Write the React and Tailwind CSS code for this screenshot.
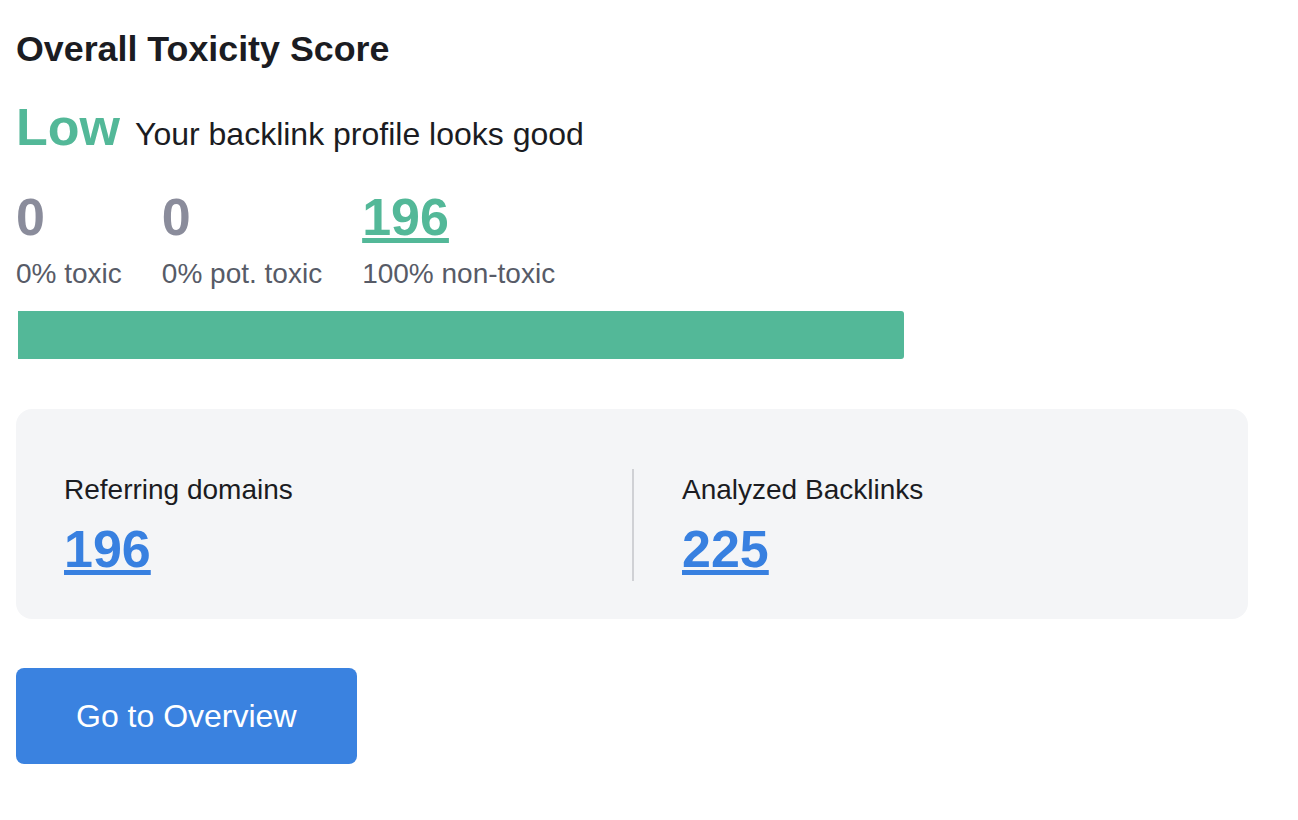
import React from 'react';

const stats = [
  { value: '0', label: '0% toxic', link: false },
  { value: '0', label: '0% pot. toxic', link: false },
  { value: '196', label: '100% non-toxic', link: true },
];

const totals = [
  { label: 'Referring domains', value: '196' },
  { label: 'Analyzed Backlinks', value: '225' },
];

const App = () => {
  return (
    <div className="min-h-screen bg-white pl-4 pt-[27px] font-['Liberation_Sans',Arial,sans-serif] text-[#1b1c22]">
      {/* Header */}
      <h2 className="text-[35.8px] font-bold leading-[44px]">Overall Toxicity Score</h2>

      <div className="mt-[26px] flex items-baseline gap-[15px]">
        <span className="text-[52px] font-bold leading-[60px] text-[#53b898]">Low</span>
        <span className="text-[32px] leading-[60px]">Your backlink profile looks good</span>
      </div>

      {/* Breakdown */}
      <div className="mt-[25px] flex gap-10">
        {stats.map((s, i) => (
          <div key={i} className="flex flex-col">
            {s.link ? (
              <a href="#" className="w-fit text-[52px] font-bold leading-[56px] text-[#53b898] underline">
                {s.value}
              </a>
            ) : (
              <span className="text-[52px] font-bold leading-[56px] text-[#8a8c9b]">{s.value}</span>
            )}
            <span className="mt-[12px] text-[28px] leading-[34px] text-[#575b67]">{s.label}</span>
          </div>
        ))}
      </div>

      <div className="ml-[2px] mt-[20px] h-12 w-[886px] rounded-r-[3px] bg-[#53b898]" />

      {/* Totals */}
      <div className="mt-[50px] grid w-[1232px] grid-cols-2 rounded-2xl bg-[#f4f5f7] px-12 pb-[38px] pt-[60px]">
        {totals.map((t, i) => (
          <div key={i} className={i === 1 ? 'border-l-2 border-[#d0d1d5] pl-12' : ''}>
            <div className="text-[28px] leading-[42px]">{t.label}</div>
            <a href="#" className="mt-[6px] block w-fit text-[52px] font-bold leading-[64px] text-[#3880e0] underline">
              {t.value}
            </a>
          </div>
        ))}
      </div>

      <button className="mt-[49px] flex h-[96px] items-center rounded-lg bg-[#3a82e0] px-[60px] text-[32px] text-white">
        Go to Overview
      </button>
    </div>
  );
};

export default App;
